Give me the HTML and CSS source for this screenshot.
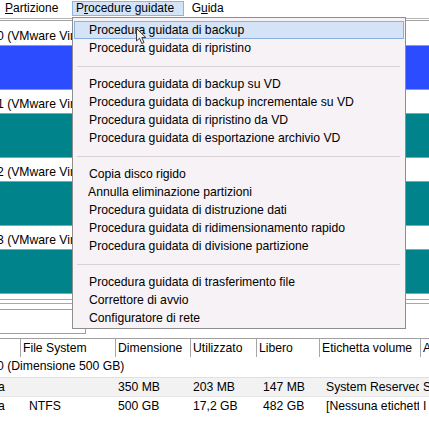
FILE: index.html
```html
<!DOCTYPE html>
<html lang="it">
<head>
<meta charset="utf-8">
<title>Procedure guidate</title>
<link rel="stylesheet" href="styles.css">
</head>
<body>
<div class="menubar">
  <span class="mitem"><u>P</u>artizione</span>
  <span class="mitem active">P<u>r</u>ocedure guidate</span>
  <span class="mitem">G<u>u</u>ida</span>
</div>

<div class="disks">
  <div class="disk first">
    <div class="dlabel">0 (VMware Virtual S SCSI Disk Device)</div>
    <div class="bar blue"></div>
  </div>
  <div class="disk">
    <div class="dlabel">1 (VMware Virtual S SCSI Disk Device)</div>
    <div class="bar teal"></div>
  </div>
  <div class="disk">
    <div class="dlabel">2 (VMware Virtual S SCSI Disk Device)</div>
    <div class="bar teal"></div>
  </div>
  <div class="disk">
    <div class="dlabel">3 (VMware Virtual S SCSI Disk Device)</div>
    <div class="bar teal"></div>
  </div>
  <div class="rule r1"></div>
  <div class="rule r2"></div>
  <div class="legend"></div>
</div>

<div class="table">
  <div class="row thead">
    <div class="c c1"></div>
    <div class="c c2">File System</div>
    <div class="c c3">Dimensione</div>
    <div class="c c4">Utilizzato</div>
    <div class="c c5">Libero</div>
    <div class="c c6">Etichetta volume</div>
    <div class="c c7">A</div>
  </div>
  <div class="row group">
    <div class="gtext">0 (Dimensione 500 GB)</div>
  </div>
  <div class="row data alt">
    <div class="c c1"><span class="cut">a</span></div>
    <div class="c c2"></div>
    <div class="c c3">350 MB</div>
    <div class="c c4">203 MB</div>
    <div class="c c5">147 MB</div>
    <div class="c c6">System Reserved</div>
    <div class="c c7">S</div>
  </div>
  <div class="row data">
    <div class="c c1"><span class="cut">a</span></div>
    <div class="c c2">NTFS</div>
    <div class="c c3">500 GB</div>
    <div class="c c4">17,2 GB</div>
    <div class="c c5">482 GB</div>
    <div class="c c6">[Nessuna etichetta]</div>
    <div class="c c7">I</div>
  </div>
</div>

<div class="menu">
  <div class="item hover">Procedura guidata di backup</div>
  <div class="item">Procedura guidata di ripristino</div>
  <div class="sep"></div>
  <div class="item">Procedura guidata di backup su VD</div>
  <div class="item">Procedura guidata di backup incrementale su VD</div>
  <div class="item">Procedura guidata di ripristino da VD</div>
  <div class="item">Procedura guidata di esportazione archivio VD</div>
  <div class="sep"></div>
  <div class="item">Copia disco rigido</div>
  <div class="item shift">Annulla eliminazione partizioni</div>
  <div class="item">Procedura guidata di distruzione dati</div>
  <div class="item">Procedura guidata di ridimensionamento rapido</div>
  <div class="item">Procedura guidata di divisione partizione</div>
  <div class="sep"></div>
  <div class="item">Procedura guidata di trasferimento file</div>
  <div class="item">Correttore di avvio</div>
  <div class="item">Configuratore di rete</div>
</div>

<svg class="cursor" width="12" height="17" viewBox="0 0 12 17" aria-hidden="true">
  <path d="M0.5 0.5 L0.5 13 L3.5 10.2 L5.8 15.5 L8 14.5 L5.8 9.5 L9.8 9.5 Z" fill="#f2f2f2" stroke="#3a3a3a" stroke-width="1" stroke-linejoin="round"/>
</svg>
</body>
</html>
```

FILE: styles.css
```css
* { box-sizing: border-box; }

html, body { margin: 0; padding: 0; }

body {
  width: 429px;
  height: 432px;
  overflow: hidden;
  position: relative;
  background: #ffffff;
  color: #000000;
  font-family: "Liberation Sans", Arial, sans-serif;
  font-size: 12px;
}

u { text-decoration: underline; text-underline-offset: 1px; }

/* ---------- menubar ---------- */
.menubar {
  display: flex;
  gap: 3.6px;
  height: 19px;
  padding: 1px 0 0 1px;
  border-bottom: 1px solid #b4b4b4;
  white-space: nowrap;
}

.mitem {
  height: 15px;
  line-height: 13px;
  padding: 0 9px 0 3px;
  border: 1px solid transparent;
}

.mitem.active {
  background: #d4e3f6;
  border-color: #8fb3e2;
}

/* ---------- disk map ---------- */
.disks {
  margin-top: 1px;
  border-top: 1px solid #a4a4a4;
}

.disk { margin-top: 6px; }
.disk.first { margin-top: 7px; }

.dlabel {
  height: 17px;
  line-height: 17px;
  margin-left: -3px;
  font-size: 12.2px;
  white-space: nowrap;
  overflow: hidden;
}

.bar {
  height: 45px;
  border-top: 1px solid #9c9c9c;
  border-bottom: 1px solid #9c9c9c;
}

.bar.blue { background: #2b4dff; }
.bar.teal { background: #00838b; }

.rule {
  border-top: 1px solid #a8a8a8;
}

.rule.r1 { margin-top: 5px; height: 4px; }
.rule.r2 { height: 6px; }

.legend {
  width: 86px;
  height: 25px;
  border-top: 1px solid #a0a0a0;
  border-right: 1px solid #a0a0a0;
  border-bottom: 1px solid #a0a0a0;
}

/* ---------- table ---------- */
.table {
  margin-top: 4px;
  border-top: 1px solid #a0a0a0;
  font-size: 12.2px;
}

.row {
  display: grid;
  grid-template-columns: 20px 95px 75px 66px 63px 101px 1fr;
  white-space: nowrap;
}

.c {
  overflow: hidden;
  padding-left: 2px;
  border-left: 1px solid transparent;
}

.c1 { border-left: none; padding-left: 0; }

.thead { height: 18px; line-height: 18px; }
.thead .c { border-left-color: #a6a6a6; }
.thead .c1 { border-left: none; }

.group {
  display: block;
  height: 20px;
  line-height: 19px;
}

.gtext { margin-left: -3px; }

.data {
  height: 19px;
  line-height: 18px;
  border-top: 1px solid #e6e6e6;
}

.data.alt { background: #f2f2f2; border-top-color: #e0e0e0; }

.data .c2 { padding-left: 8px; }
.data .c5, .data .c6 { padding-left: 6px; }
.data .c6 { clip-path: inset(0 1px 0 0); }

.cut { margin-left: -2px; }

/* ---------- dropdown menu ---------- */
.menu {
  position: absolute;
  left: 72px;
  top: 17px;
  width: 334px;
  height: 312px;
  padding: 3px 1px 2px 1px;
  background: #f6f2f5;
  border: 1px solid #8e8e8e;
  white-space: nowrap;
  font-size: 12.2px;
}

.item {
  height: 18px;
  line-height: 16px;
  padding-left: 14px;
  border: 1px solid transparent;
}

.item.shift { padding-left: 13px; }

.item.hover {
  background: #d4e3f6;
  border-color: #8ab0e2;
}

.sep {
  height: 18px;
  display: flex;
  align-items: center;
  padding: 0 4px 0 3px;
}

.sep::after {
  content: "";
  display: block;
  width: 100%;
  height: 1px;
  background: #d8d2d6;
}

.cursor {
  position: absolute;
  left: 136px;
  top: 28px;
}
```
